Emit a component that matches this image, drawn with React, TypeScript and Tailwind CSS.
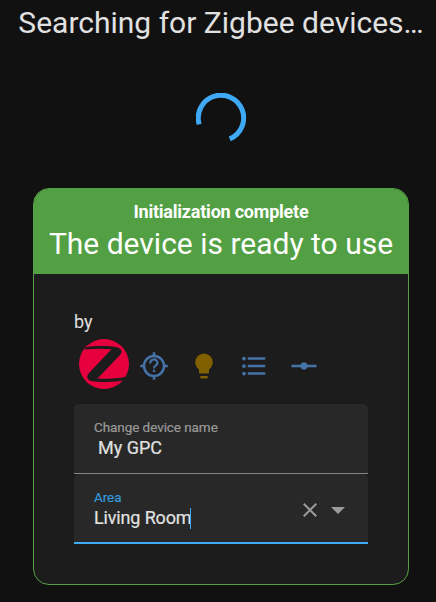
import React from "react";

const LIGHTBULB =
  "M12,2A7,7 0 0,0 5,9C5,11.38 6.19,13.47 8,14.74V17A1,1 0 0,0 9,18H15A1,1 0 0,0 16,17V14.74C17.81,13.47 19,11.38 19,9A7,7 0 0,0 12,2M9,21A1,1 0 0,0 10,22H14A1,1 0 0,0 15,21V20H9V21Z";
const LIST =
  "M7,5H21V7H7V5M7,13V11H21V13H7M4,4.5A1.5,1.5 0 0,1 5.5,6A1.5,1.5 0 0,1 4,7.5A1.5,1.5 0 0,1 2.5,6A1.5,1.5 0 0,1 4,4.5M4,10.5A1.5,1.5 0 0,1 5.5,12A1.5,1.5 0 0,1 4,13.5A1.5,1.5 0 0,1 2.5,12A1.5,1.5 0 0,1 4,10.5M7,19V17H21V19H7M4,16.5A1.5,1.5 0 0,1 5.5,18A1.5,1.5 0 0,1 4,19.5A1.5,1.5 0 0,1 2.5,18A1.5,1.5 0 0,1 4,16.5Z";
const RAY_VERTEX =
  "M2,11H9.17C9.58,9.83 10.69,9 12,9C13.31,9 14.42,9.83 14.83,11H22V13H14.83C14.42,14.17 13.31,15 12,15C10.69,15 9.58,14.17 9.17,13H2V11Z";
const CLOSE =
  "M19,6.41L17.59,5L12,10.59L6.41,5L5,6.41L10.59,12L5,17.59L6.41,19L12,13.41L17.59,19L19,17.59L13.41,12L19,6.41Z";

function Icon({ path, className }: { path: string; className: string }) {
  return (
    <svg viewBox="0 0 24 24" className={className} fill="currentColor">
      <path d={path} />
    </svg>
  );
}

function Spinner() {
  return (
    <svg viewBox="0 0 50 50" className="h-[50px] w-[50px]" fill="none" stroke="#3fa9f5" strokeWidth="5">
      <path d="M3.2,31.4A22.7,22.7 0 1 1 33.7,45.9" />
    </svg>
  );
}

function ZigbeeLogo() {
  return (
    <svg viewBox="0 0 50 50" className="h-[50px] w-[50px]">
      <circle cx="25" cy="25" r="25" fill="#e6003e" />
      <path
        d="M7.5,8C16,7 29,6.7 37,7.9C42.6,8.8 44,12.8 41,16L18.5,39.6C27,40.2 38,39.6 47.2,37.8L45,41.6C35,43.3 22,43.4 13.2,42.2C8,41.5 6.8,37.5 10,34.1L32.5,10.3C24,9.5 14,9.6 5.2,10.6Z"
        fill="#1c1c1c"
      />
    </svg>
  );
}

function CrosshairsQuestion() {
  return (
    <svg viewBox="0 0 24 24" className="h-[30px] w-[30px]" fill="none" stroke="currentColor" strokeWidth="2">
      <circle cx="12" cy="12" r="8" />
      <path d="M12,1V4M12,20V23M1,12H4M20,12H23" />
      <path d="M9.2,10A2.8,2.6 0 1 1 13.6,11.4C12.5,12.2 12,12.5 12,14" strokeWidth="1.7" />
      <path d="M12,15V16.8" strokeWidth="1.8" />
    </svg>
  );
}

export default function App() {
  return (
    <main className="flex h-[602px] w-[436px] flex-col items-center overflow-hidden bg-[#111111] font-['Roboto','Liberation_Sans',sans-serif] text-[#e1e1e1]">
      <h1 className="mt-[3px] ml-[6px] text-[30px] leading-10 whitespace-nowrap">Searching for Zigbee devices…</h1>
      <div className="mt-[50px] ml-[6px]">
        <Spinner />
      </div>
      <section className="mt-[45px] ml-[6px] h-[397px] w-[376px] overflow-hidden rounded-[16px] border border-[#52a043] bg-[#1c1c1c]">
        <header className="flex h-[85px] flex-col items-center bg-[#52a043] pt-[10px] text-white">
          <div className="text-lg leading-[26px] font-bold tracking-[-0.22px] whitespace-nowrap">
            Initialization complete
          </div>
          <div className="text-[30px] leading-[38px] whitespace-nowrap">The device is ready to use</div>
        </header>
        <div className="px-10 pt-[35px]">
          <div className="text-lg leading-[26px]">by</div>
          <div className="mt-[4px] ml-[5px] flex h-[50px] items-center text-[#4573a8]">
            <ZigbeeLogo />
            <div className="mt-[3px] ml-[10px] flex gap-5">
              <CrosshairsQuestion />
              <Icon path={LIGHTBULB} className="h-[30px] w-[30px] text-[#806000]" />
              <Icon path={LIST} className="h-[30px] w-[30px]" />
              <Icon path={RAY_VERTEX} className="h-[30px] w-[30px]" />
            </div>
          </div>
          <label className="mt-[15px] block h-[70px] rounded-t-[5px] border-b border-[#858585] bg-[#282828] px-5 pt-[14px]">
            <span className="block text-[13.5px] leading-[18px] tracking-[-0.07px] text-[#999999] [-webkit-text-stroke:0.2px]">
              Change device name
            </span>
            <span className="block pl-1 text-lg leading-6 [-webkit-text-stroke:0.2px]">My GPC</span>
          </label>
          <div className="flex h-[70px] rounded-t-[5px] border-b-2 border-[#3fa9f5] bg-[#282828] pr-[23px] pl-5">
            <div className="flex-1 pt-[14px]">
              <div className="text-[13.5px] leading-[18px] tracking-[-0.07px] text-[#3398db] [-webkit-text-stroke:0.2px]">
                Area
              </div>
              <div className="flex items-center text-lg leading-6 tracking-[-0.15px] [-webkit-text-stroke:0.2px]">
                Living Room
                <span className="-ml-px h-[21px] w-px bg-[#3fa9f5]" />
              </div>
            </div>
            <div className="flex items-center pt-1 text-[#9b9b9b]">
              <Icon path={CLOSE} className="h-6 w-6" />
              <svg viewBox="0 0 14 7" className="ml-[9px] h-[7px] w-[14px]" fill="currentColor">
                <path d="M0,0H14L7,7Z" />
              </svg>
            </div>
          </div>
        </div>
      </section>
    </main>
  );
}
